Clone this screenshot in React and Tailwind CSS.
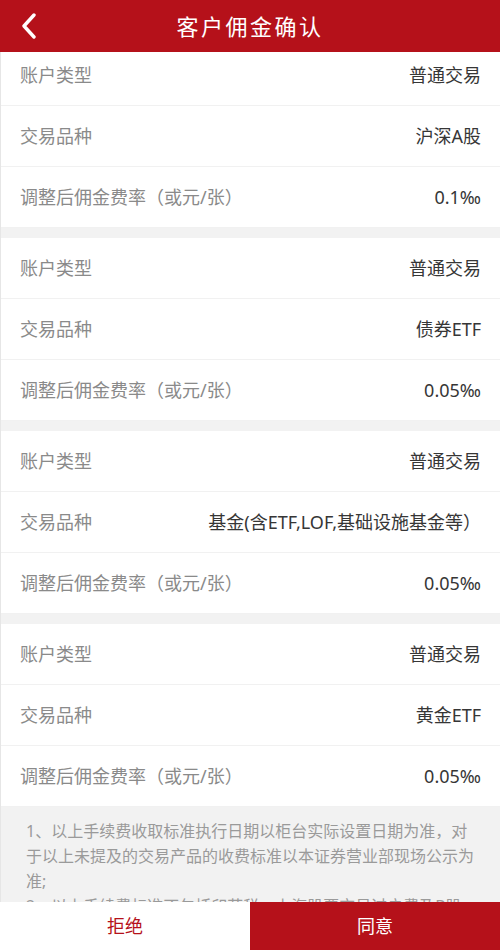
import React from "react";

const groups = [
  { type: "普通交易", product: "沪深A股", rate: "0.1‰" },
  { type: "普通交易", product: "债券ETF", rate: "0.05‰" },
  { type: "普通交易", product: "基金(含ETF,LOF,基础设施基金等）", rate: "0.05‰" },
  { type: "普通交易", product: "黄金ETF", rate: "0.05‰" },
];

function Row({ label, value }) {
  return (
    <div className="flex h-[61px] items-center justify-between border-b border-[#f1f1f1] px-[19px]">
      <span className="text-[18px] text-[#8a8a8a]">{label}</span>
      <span className="text-[18px] text-[#363636]">{value}</span>
    </div>
  );
}

export default function App() {
  return (
    <div
      className="flex h-[950px] w-[500px] flex-col overflow-hidden bg-white"
      style={{ fontFamily: '"Noto Sans", "Noto Sans CJK SC", sans-serif' }}
    >
      <header className="relative flex h-[52px] shrink-0 items-center justify-center bg-[#b5111a]">
        <button className="absolute left-[18px] top-[12px] flex h-[28px] w-[22px] items-center justify-center">
          <svg width="18" height="26" viewBox="0 0 18 26" fill="none">
            <polyline
              points="14,2 4,13 14,24"
              stroke="white"
              strokeWidth="3.4"
              strokeLinecap="round"
              strokeLinejoin="round"
            />
          </svg>
        </button>
        <h1 className="text-[22px] tracking-[2.5px] text-white">客户佣金确认</h1>
      </header>

      <main className="flex-1 overflow-hidden border-l border-[#e6e6e6] bg-[#f2f2f2]">
        <div className="-mt-[7px] flex flex-col gap-[10px]">
          {groups.map((g, i) => (
            <section key={i} className="bg-white">
              <Row label="账户类型" value={g.type} />
              <Row label="交易品种" value={g.product} />
              <Row label="调整后佣金费率（或元/张）" value={g.rate} />
            </section>
          ))}
        </div>
        <div className="px-[25px] pt-[12px] text-[16px] leading-[25px] text-[#9a9a9a]">
          <p>
            1、以上手续费收取标准执行日期以柜台实际设置日期为准，对于以上未提及的交易产品的收费标准以本证券营业部现场公示为准;
          </p>
          <p>2、以上手续费标准不包括印花税，上海股票交易过户费及B股清算费等其他费用;</p>
        </div>
      </main>

      <footer className="flex h-[48px] shrink-0">
        <button className="flex flex-1 items-center justify-center bg-white text-[18px] text-[#b5111a]">
          拒绝
        </button>
        <button className="flex flex-1 items-center justify-center bg-[#b5111a] text-[18px] text-white">
          同意
        </button>
      </footer>
    </div>
  );
}
